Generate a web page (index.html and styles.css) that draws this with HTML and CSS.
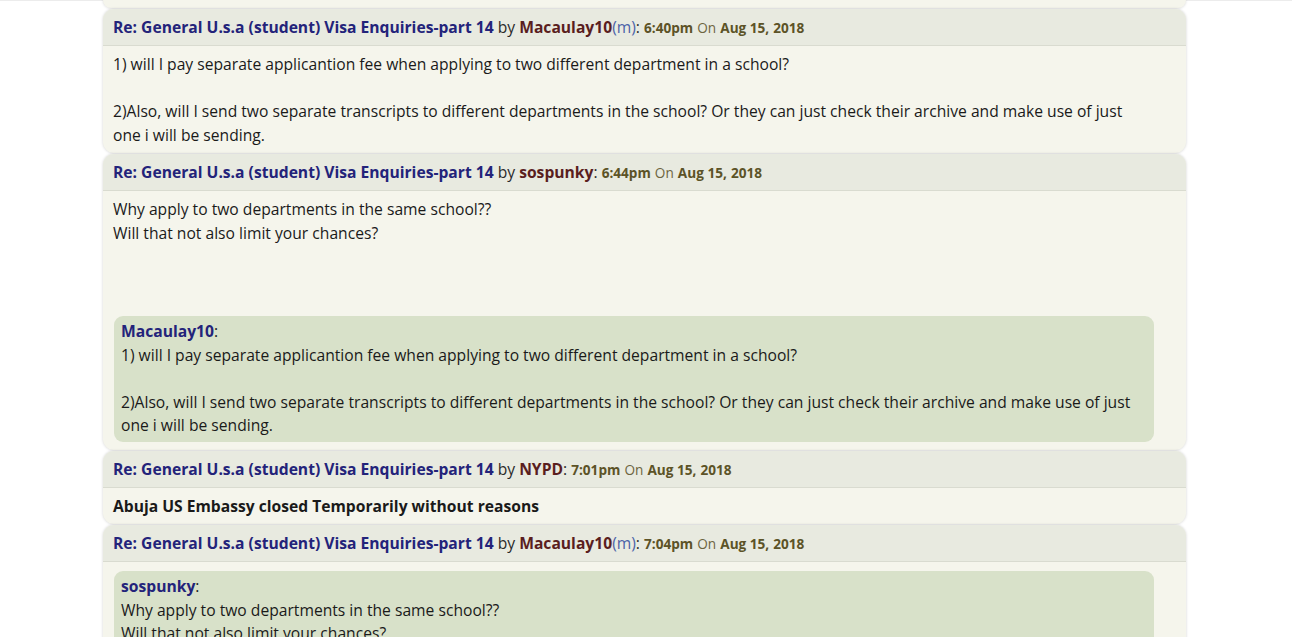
FILE: index.html
```html
<!DOCTYPE html>
<html>
<head>
<meta charset="utf-8">
<link rel="stylesheet" href="styles.css">
</head>
<body>
<div class="topline"></div>
<div class="thread">
  <div class="post stub"><div class="body stub-body"></div></div>

  <div class="post">
    <div class="head"><a class="title">Re: General U.s.a (student) Visa Enquiries-part 14</a> by <a class="user">Macaulay10</a><span class="sex">(m)</span>: <b class="time">6:40pm</b> <span class="on">On</span> <b class="time">Aug 15</b><span class="time">,</span> <b class="time">2018</b></div>
    <div class="body">1) will I pay separate applicantion fee when applying to two different department in a school?<br><br>2)Also, will I send two separate transcripts to different departments in the school? Or they can just check their archive and make use of just one i will be sending.</div>
  </div>

  <div class="post">
    <div class="head"><a class="title">Re: General U.s.a (student) Visa Enquiries-part 14</a> by <a class="user">sospunky</a>: <b class="time">6:44pm</b> <span class="on">On</span> <b class="time">Aug 15</b><span class="time">,</span> <b class="time">2018</b></div>
    <div class="body">Why apply to two departments in the same school??<br>Will that not also limit your chances?<br><br><br>
      <blockquote class="quote gap"><a class="quser">Macaulay10</a>:<br>1) will I pay separate applicantion fee when applying to two different department in a school?<br><br>2)Also, will I send two separate transcripts to different departments in the school? Or they can just check their archive and make use of just one i will be sending.</blockquote>
    </div>
  </div>

  <div class="post">
    <div class="head"><a class="title">Re: General U.s.a (student) Visa Enquiries-part 14</a> by <a class="user">NYPD</a>: <b class="time">7:01pm</b> <span class="on">On</span> <b class="time">Aug 15</b><span class="time">,</span> <b class="time">2018</b></div>
    <div class="body"><b>Abuja US Embassy closed Temporarily without reasons</b></div>
  </div>

  <div class="post">
    <div class="head"><a class="title">Re: General U.s.a (student) Visa Enquiries-part 14</a> by <a class="user">Macaulay10</a><span class="sex">(m)</span>: <b class="time">7:04pm</b> <span class="on">On</span> <b class="time">Aug 15</b><span class="time">,</span> <b class="time">2018</b></div>
    <div class="body top">
      <blockquote class="quote"><a class="quser">sospunky</a>:<br>Why apply to two departments in the same school??<br>Will that not also limit your chances?<br><br><br>1) will I pay separate applicantion fee when applying to two different department in a school?</blockquote>
    </div>
  </div>
</div>
</body>
</html>
```
FILE: styles.css
```css
html, body {
  margin: 0;
  padding: 0;
  background: #ffffff;
  overflow: hidden;
}
body {
  font-family: "Open Sans", "DejaVu Sans", sans-serif;
  font-size: 15.65px;
  line-height: 23.5px;
  color: #1a1a1a;
  height: 637px;
}
.topline {
  height: 1px;
  background: #ececec;
}
.thread {
  width: 1083px;
  margin-left: 103px;
  margin-top: -1px;
}
.post {
  background: #f5f5ec;
  border-radius: 11px;
  box-shadow: 0 0 3px rgba(0,0,0,0.18);
  margin-bottom: 1px;
  overflow: hidden;
}
.stub {
  border-radius: 0 0 11px 11px;
}
.stub-body {
  height: 8px;
  padding: 0 !important;
}
.head {
  background: #e8eae0;
  border-bottom: 1px solid #d9dbd0;
  padding: 7px 10px 6px;
  line-height: 23px;
  color: #2a2a2a;
}
.title {
  color: #23237a;
  font-weight: 700;
}
.user {
  color: #5a1e1e;
  font-weight: 700;
}
.sex {
  color: #4b62a8;
}
.time {
  color: #5c5327;
  font-weight: 700;
  font-size: 13.6px;
}
.on {
  color: #6d6540;
  font-size: 13.6px;
}
.body {
  padding: 7px 35px 6px 10px;
}
.body.top {
  padding-top: 9px;
}
.quote {
  margin: 0 -3px 0 1px;
  background: #d8e1c9;
  border-radius: 9px;
  padding: 4px 7px 4px;
}
.quote.gap {
  margin-top: 24px;
  margin-bottom: 2px;
}
.quser {
  color: #23237a;
  font-weight: 700;
}
```
